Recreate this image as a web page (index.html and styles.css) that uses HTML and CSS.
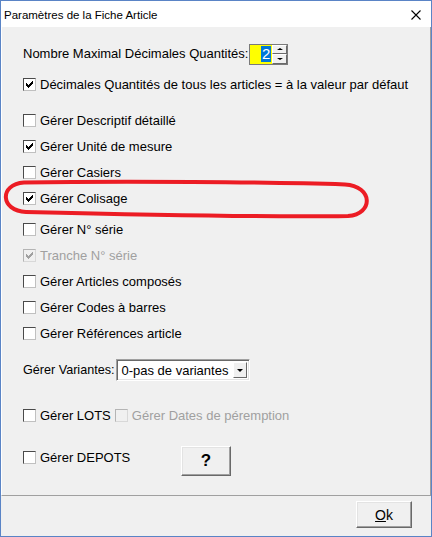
FILE: index.html
```html
<!DOCTYPE html>
<html lang="fr">

<head>
    <meta charset="UTF-8">
    <title>Paramètres de la Fiche Article</title>
    <link rel="stylesheet" href="styles.css">
</head>

<body>

    <div class="window">
        <div class="titlebar">
            <span class="title">Paramètres de la Fiche Article</span>
            <svg class="close" width="10" height="10" viewBox="0 0 10 10">
                <path d="M0.5 0.5 L9.5 9.5 M9.5 0.5 L0.5 9.5" stroke="#000" stroke-width="1.1" fill="none" />
            </svg>
        </div>

        <div class="panel">
            <div class="row">
                <span>Nombre Maximal Décimales Quantités:</span>
                <span class="spin">
                    <span class="spin-val"><span class="sel">2</span></span>
                    <span class="spin-btns">
                        <span class="spin-btn"><span class="arrow up"></span></span>
                        <span class="spin-btn"><span class="arrow down"></span></span>
                    </span>
                </span>
            </div>

            <div class="row m11"><span class="chk on"><svg viewBox="0 0 11 11"><path d="M2 4 L4 6 L9 1 L9 4 L4 9 L2 7 Z" /></svg></span>Décimales Quantités de tous les articles = à la valeur par défaut</div>

            <div class="row m16"><span class="chk"></span>Gérer Descriptif détaillé</div>
            <div class="row m6"><span class="chk on"><svg viewBox="0 0 11 11"><path d="M2 4 L4 6 L9 1 L9 4 L4 9 L2 7 Z" /></svg></span>Gérer Unité de mesure</div>
            <div class="row m6"><span class="chk"></span>Gérer Casiers</div>
            <div class="row m6"><span class="chk on"><svg viewBox="0 0 11 11"><path d="M2 4 L4 6 L9 1 L9 4 L4 9 L2 7 Z" /></svg></span>Gérer Colisage</div>
            <div class="row m11"><span class="chk"></span>Gérer N° série</div>
            <div class="row m6 disabled"><span class="chk on"><svg viewBox="0 0 11 11"><path d="M2 4 L4 6 L9 1 L9 4 L4 9 L2 7 Z" /></svg></span>Tranche N° série</div>
            <div class="row m6"><span class="chk"></span>Gérer Articles composés</div>
            <div class="row m6"><span class="chk"></span>Gérer Codes à barres</div>
            <div class="row m6"><span class="chk"></span>Gérer Références article</div>

            <div class="row variantes m16">
                <span>Gérer Variantes:</span>
                <span class="combo">
                    <span class="combo-text">0-pas de variantes</span>
                    <span class="combo-btn"><span class="arrow down"></span></span>
                </span>
            </div>

            <div class="row m24">
                <span class="chk"></span>Gérer LOTS
                <span class="disabled dates"><span class="chk"></span>Gérer Dates de péremption</span>
            </div>

            <div class="row depots m21">
                <span class="depots-label"><span class="chk"></span>Gérer DEPOTS</span>
                <button type="button" class="btn help">?</button>
            </div>
        </div>

        <div class="footer">
            <button type="button" class="btn ok"><u>O</u>k</button>
        </div>

        <!-- red highlight drawn over the dialog -->
        <svg class="mark" width="432" height="537" viewBox="0 0 432 537">
            <path d="M24 182.5 C 120 181, 270 182, 345 184.5 C 373 186, 374 214, 348 216 C 260 217.5, 110 214, 26 212 C 0 211, -1 184, 24 182.5 Z"
                fill="none" stroke="#ec1c24" stroke-width="4" />
        </svg>
    </div>

</body>

</html>
```

FILE: styles.css
```css
body {
    margin: 0;
    font-family: 'Liberation Sans', Arial, sans-serif;
    font-size: 13px;
    color: #000;
    background-color: #f0f0f0;
}

.window {
    position: relative;
    width: 432px;
    height: 537px;
    box-sizing: border-box;
    border: 1px solid #5a84c6;
    background-color: #f0f0f0;
    display: flex;
    flex-direction: column;
}

.titlebar {
    height: 26px;
    flex: none;
    background-color: #fff;
    display: flex;
    align-items: center;
    justify-content: space-between;
    padding: 0 10px 0 3px;
}

.title {
    font-size: 11.5px;
    padding-top: 1px;
}

.close {
    display: block;
    margin-top: 1px;
}

.panel {
    height: 469px;
    flex: none;
    box-sizing: border-box;
    border-left: 1px solid #fff;
    border-right: 1px solid #a0a0a0;
    border-bottom: 1px solid #a0a0a0;
    padding: 16px 0 0 21px;
}

.row {
    height: 20px;
    display: flex;
    align-items: center;
    white-space: nowrap;
}

.m6 { margin-top: 6px; }
.m11 { margin-top: 11px; }
.m16 { margin-top: 16px; }
.m21 { margin-top: 21px; }
.m24 { margin-top: 24px; }

.disabled {
    color: #a0a0a0;
}

/* checkbox */
.chk {
    position: relative;
    flex: none;
    width: 13px;
    height: 13px;
    box-sizing: border-box;
    margin-right: 4px;
    border: 1px solid;
    border-color: #4a4a4a #c0c0c0 #c0c0c0 #4a4a4a;
    background-color: #fff;
}

.chk svg {
    display: block;
    width: 11px;
    height: 11px;
    fill: #000;
    shape-rendering: crispEdges;
}

.disabled .chk {
    border-color: #b4b4b4 #d8d8d8 #d8d8d8 #b4b4b4;
    background-color: #f0f0f0;
}

.disabled .chk svg {
    fill: #a0a0a0;
}

.dates {
    display: flex;
    align-items: center;
    margin-left: 4px;
}

/* spin box */
.spin {
    display: flex;
    width: 39px;
    height: 21px;
    box-sizing: border-box;
    border: 1px solid #7a7a7a;
    margin-left: 1px;
    margin-top: 2px;
}

.spin-val {
    flex: 1;
    background-color: #ffff00;
    display: flex;
    align-items: center;
    justify-content: flex-end;
    padding-right: 1px;
    font-size: 15px;
}

.sel {
    background-color: #0078d7;
    color: #fff;
    line-height: 16px;
    padding: 0 1px;
}

.spin-btns {
    width: 15px;
    display: flex;
    flex-direction: column;
}

.spin-btn {
    flex: 1;
    box-sizing: border-box;
    background-color: #f0f0f0;
    border: 1px solid;
    border-color: #fff #696969 #696969 #fff;
    display: flex;
    align-items: center;
    justify-content: center;
}

.arrow {
    width: 0;
    height: 0;
    border-left: 3px solid transparent;
    border-right: 3px solid transparent;
}

.arrow.up {
    border-bottom: 2px solid #000;
}

.arrow.down {
    border-top: 2px solid #000;
}

/* combo */
.variantes {
    height: 22px;
    font-size: 12.6px;
}

.combo {
    display: flex;
    align-items: center;
    width: 134px;
    height: 22px;
    box-sizing: border-box;
    margin-left: 2px;
    border: 1px solid;
    border-color: #a0a0a0 #fff #fff #a0a0a0;
    box-shadow: inset 1px 1px 0 #696969, inset -1px -1px 0 #e3e3e3;
    background-color: #fff;
    padding: 2px 2px 2px 4px;
    font-size: 13px;
}

.combo-text {
    flex: 1;
}

.combo-btn {
    width: 14px;
    height: 16px;
    box-sizing: border-box;
    background-color: #f0f0f0;
    border: 1px solid;
    border-color: #fff #696969 #696969 #fff;
    display: flex;
    align-items: center;
    justify-content: center;
}

.combo-btn .arrow {
    border-left-width: 3.5px;
    border-right-width: 3.5px;
    border-top-width: 3px;
}

/* buttons */
.btn {
    font-family: 'Liberation Sans', Arial, sans-serif;
    font-size: 13px;
    color: #000;
    background-color: #f0f0f0;
    box-sizing: border-box;
    border: 1px solid;
    border-color: #fff #696969 #696969 #fff;
    box-shadow: inset -1px -1px 0 #a0a0a0, inset 1px 1px 0 #e3e3e3;
    padding: 0;
    margin: 0;
}

.depots {
    height: 30px;
    align-items: flex-start;
}

.depots-label {
    display: flex;
    align-items: center;
    height: 20px;
    margin-top: 1px;
    width: 158px;
}

.help {
    width: 50px;
    height: 30px;
    font-size: 17px;
    font-weight: bold;
}

.footer {
    flex: 1;
    display: flex;
    justify-content: flex-end;
    padding: 5px 19px 0 0;
}

.ok {
    width: 56px;
    height: 27px;
    font-size: 14px;
}

.mark {
    position: absolute;
    left: -1px;
    top: -1px;
    pointer-events: none;
}
```
